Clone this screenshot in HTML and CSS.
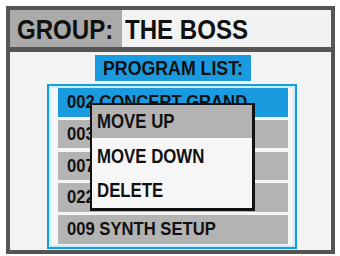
FILE: index.html
```html
<!DOCTYPE html>
<html>
<head>
<meta charset="utf-8">
<link rel="stylesheet" href="styles.css">
</head>
<body>
<div class="frame">
  <div class="header">
    <div class="group"><span class="t">GROUP:</span></div>
    <div class="name"><span class="t">THE BOSS</span></div>
  </div>
  <div class="content">
    <div class="tab"><span class="t">PROGRAM LIST:</span></div>
    <div class="listbox">
      <div class="row sel"><span class="t">002 CONCERT GRAND</span></div>
      <div class="row"><span class="t">003</span></div>
      <div class="row"><span class="t">007</span></div>
      <div class="row"><span class="t">022</span></div>
      <div class="row"><span class="t">009 SYNTH SETUP</span></div>
    </div>
    <div class="menu">
      <div class="item hl"><span class="t">MOVE UP</span></div>
      <div class="item"><span class="t">MOVE DOWN</span></div>
      <div class="item"><span class="t">DELETE</span></div>
    </div>
  </div>
</div>
</body>
</html>
```
FILE: styles.css
```css
html, body {
  margin: 0;
  padding: 0;
  background: #ffffff;
}
body {
  font-family: "Liberation Sans", Arial, sans-serif;
  font-weight: bold;
  color: #111;
}
.t {
  display: inline-block;
  white-space: nowrap;
  transform-origin: left center;
}
.frame {
  margin: 6px 0 0 6px;
  width: 321px;
  height: 240px;
  border: 4px solid #555;
  background: #f3f3f3;
  display: flex;
  flex-direction: column;
}
.header {
  display: flex;
  height: 37px;
  border-bottom: 5px solid #555;
  font-size: 28px;
  line-height: 35px;
}
.header .t {
  transform: scaleX(0.86);
}
.group {
  width: 105px;
  padding: 2px 0 0 7px;
  background: #aaaaaa;
}
.name {
  flex: 1;
  padding: 2px 0 0 3px;
  background: #f2f2f2;
}
.content {
  position: relative;
  flex: 1;
  padding-top: 3px;
}
.tab {
  margin-left: 85px;
  width: 148px;
  height: 26px;
  line-height: 26px;
  padding-left: 8px;
  background: #1a9be0;
  font-size: 21px;
}
.tab .t {
  transform: scaleX(0.845);
}
.listbox {
  margin: 3px 0 0 37px;
  width: 230px;
  border: 2px solid #1a9be0;
  box-shadow: inset 0 0 0 2px #c4effc;
  background: #f6f6f6;
  padding: 2px 7px 3px 9px;
  display: flex;
  flex-direction: column;
  gap: 3.25px;
}
.row {
  height: 28.5px;
  line-height: 28.5px;
  padding-left: 9px;
  background: #b3b3b3;
  font-size: 19px;
  overflow: hidden;
}
.row .t {
  transform: scaleX(0.875);
}
.row.sel {
  background: #1a9be0;
}
.menu {
  position: absolute;
  left: 80px;
  top: 51px;
  width: 160px;
  border-top: 2px solid #111;
  border-left: 2px solid #111;
  border-right: 3px solid #111;
  border-bottom: 3px solid #111;
  background: #f6f6f6;
  display: flex;
  flex-direction: column;
}
.item {
  height: 33px;
  line-height: 33px;
  padding-left: 5px;
  font-size: 20px;
  border-bottom: 1px solid #f6f6f6;
}
.item .t {
  transform: scaleX(0.84);
}
.item.hl {
  background: #b3b3b3;
  border-bottom: 2px solid #fafafa;
}
```
